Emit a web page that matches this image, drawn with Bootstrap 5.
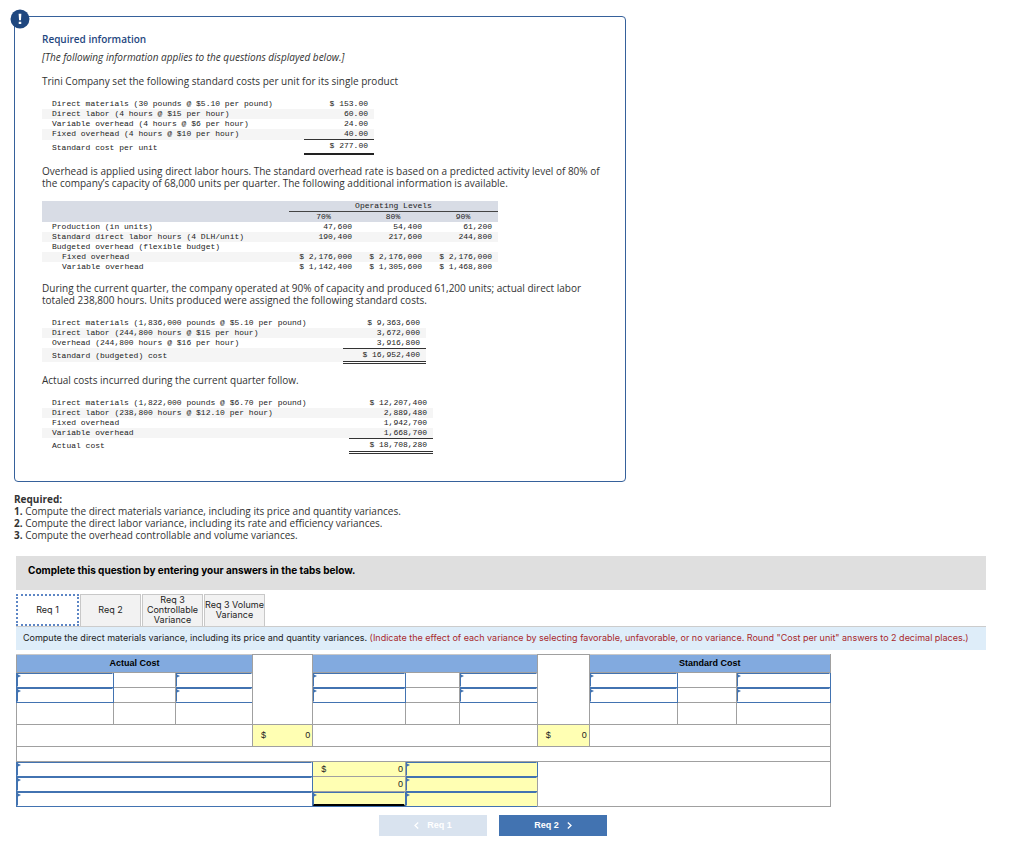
<!DOCTYPE html>
<html lang="en">
<head>
<meta charset="utf-8">
<meta name="viewport" content="width=device-width, initial-scale=1">
<title>Trini Company – Standard Costs</title>
<link href="https://cdn.jsdelivr.net/npm/bootstrap@5.3.0/dist/css/bootstrap.min.css" rel="stylesheet">
<style>
  :root { --navy: #1f477f; --blue: #4273b1; --head: #82aadf; --calc: #ffffb3; --line: #a0a0a0; }
  body { font: 10px/12px "Open Sans", sans-serif; color: #333; background: #fff; }
  .page { padding: 16px 38px 16px 14px; }

  /* Information panel */
  .info-panel { max-width: 63%; border: 1px solid #36619b; border-radius: 4px; padding: 16px 16px 27px 27px; }
  .info-mark { top: -8px; left: -5px; width: 20px; height: 20px; }
  .info-title { font: 600 10px/12px "Open Sans", sans-serif; color: var(--navy); margin: 0 0 6px; }
  .info-panel p { margin: 0 0 12px; }
  .required { margin: 11px 0 15px; }

  /* Cost listings */
  .costs { font: 8px/10px "Liberation Mono", monospace; color: #222; border-collapse: collapse; margin-bottom: 10px; }
  .costs th { font-weight: 400; text-align: left; }
  .costs th, .costs td { padding: 0 0 0 10px; height: 10px; white-space: nowrap; }
  .costs td { text-align: right; padding: 0 6px 0 0; }
  .costs tbody tr:nth-child(even) { background: #f5f5f5; }
  .costs thead { background: #d8dce5; }
  .costs thead th { text-align: center; padding: 0; }
  .costs .levels { border-bottom: 1px solid #444; }
  .costs .indent { padding-left: 20px; }
  .costs .total th { height: 14px; padding-top: 2px; }
  .costs .total td { border-top: 1px solid #333; border-bottom: 2px solid #222; }
  .costs .double td { border-bottom: 3px double #333; }

  /* Answer area */
  .answers { margin-left: 2px; font: 9px/10px Inter, sans-serif; color: #222; }
  .prompt-bar { background: #dfdfdf; padding: 8px 12px 14px; font: 700 10px/12px Inter, sans-serif; color: #000; }
  .req-tabs { border-bottom: 1px solid #ccc; gap: 1px; }
  .req-tabs .nav-link { width: 61px; height: 32px; padding: 0; border: 1px solid #c8c8c8; border-bottom: 0; border-radius: 0; background: #f2f2f2; color: #222; }
  .req-tabs .nav-link.active { width: 63px; border: 2px dotted #5d86c5; background: #fff; color: #222; }
  .instruction { background: #deedf9; padding: 6px 7px 7px; }
  .instruction em { font-style: normal; color: #a8282c; }

  .sheet { width: 84%; table-layout: fixed; border-collapse: collapse; font: 9px/10px "Liberation Sans", sans-serif; border-top: 1px solid #c8c8c8; }
  .sheet th, .sheet td { border: 1px solid var(--line); padding: 0; }
  .sheet th { background: var(--head); text-align: center; color: #000; border-top-color: #c8c8c8; }
  .sheet .entry { position: relative; height: 15px; border-color: var(--blue); }
  .sheet .entry::before { content: ""; position: absolute; top: 1px; left: 0; border: 2px solid transparent; border-left: 4px solid var(--blue); border-right: 0; pointer-events: none; }
  .sheet input { display: block; width: 100%; height: 14px; border: 1px solid transparent; border-top-color: var(--blue); border-left-color: var(--blue); padding: 0 4px; background: transparent; font: inherit; outline: 0; }
  .sheet input:focus { border-color: var(--navy); }
  .sheet .calc { background: var(--calc); }
  .sheet .amount { padding: 0 2px 0 8px; }
  .sheet .sum input { border-bottom: 2px solid #000; }
  .h-head { height: 18px; } .h-entry { height: 15px; } .h-tall { height: 22px; } .h-gap { height: 15px; }

  .step { width: 108px; height: 21px; padding: 0; border: 0; border-radius: 0; background: var(--blue); color: #fff; font: 700 9px/20px "Liberation Sans", sans-serif; }
  .step:hover { background: var(--navy); color: #fff; }
  .step:disabled { background: #d9e3ef; color: #fff; opacity: 1; }
</style>
</head>
<body>
<main class="page">
  <section class="info-panel position-relative">
    <svg class="info-mark position-absolute" viewBox="0 0 19 19" aria-hidden="true"><circle cx="9.500" cy="9.500" r="9" fill="#1f477f"/><path d="M8.200 4.500h2.600l-.4 6.300H8.600zM8.300 12h2.400v2.300H8.300z" fill="#fff"/></svg>
    <h1 class="info-title">Required information</h1>
    <p><i>[The following information applies to the questions displayed below.]</i></p>
    <p>Trini Company set the following standard costs per unit for its single product</p>
    <table class="costs">
      <colgroup><col style="width:262px"><col style="width:70px"></colgroup>
      <tbody>
        <tr><th>Direct materials (30 pounds @ $5.10 per pound)</th><td>$ 153.00</td></tr>
        <tr><th>Direct labor (4 hours @ $15 per hour)</th><td>60.00</td></tr>
        <tr><th>Variable overhead (4 hours @ $6 per hour)</th><td>24.00</td></tr>
        <tr><th>Fixed overhead (4 hours @ $10 per hour)</th><td>40.00</td></tr>
        <tr class="total"><th>Standard cost per unit</th><td>$ 277.00</td></tr>
      </tbody>
    </table>
    <p>Overhead is applied using direct labor hours. The standard overhead rate is based on a predicted activity level of 80% of<br>the company’s capacity of 68,000 units per quarter. The following additional information is available.</p>
    <table class="costs">
      <colgroup><col style="width:247px"><col style="width:69px"><col style="width:70px"><col style="width:70px"></colgroup>
      <thead>
        <tr><th></th><th class="levels" colspan="3">Operating Levels</th></tr>
        <tr><th></th><th>70%</th><th>80%</th><th>90%</th></tr>
      </thead>
      <tbody>
        <tr><th>Production (in units)</th><td>47,600</td><td>54,400</td><td>61,200</td></tr>
        <tr><th>Standard direct labor hours (4 DLH/unit)</th><td>190,400</td><td>217,600</td><td>244,800</td></tr>
        <tr><th>Budgeted overhead (flexible budget)</th><td></td><td></td><td></td></tr>
        <tr><th class="indent">Fixed overhead</th><td>$ 2,176,000</td><td>$ 2,176,000</td><td>$ 2,176,000</td></tr>
        <tr><th class="indent">Variable overhead</th><td>$ 1,142,400</td><td>$ 1,305,600</td><td>$ 1,468,800</td></tr>
      </tbody>
    </table>
    <p>During the current quarter, the company operated at 90% of capacity and produced 61,200 units; actual direct labor<br>totaled 238,800 hours. Units produced were assigned the following standard costs.</p>
    <table class="costs">
      <colgroup><col style="width:301px"><col style="width:83px"></colgroup>
      <tbody>
        <tr><th>Direct materials (1,836,000 pounds @ $5.10 per pound)</th><td>$ 9,363,600</td></tr>
        <tr><th>Direct labor (244,800 hours @ $15 per hour)</th><td>3,672,000</td></tr>
        <tr><th>Overhead (244,800 hours @ $16 per hour)</th><td>3,916,800</td></tr>
        <tr class="total double"><th>Standard (budgeted) cost</th><td>$ 16,952,400</td></tr>
      </tbody>
    </table>
    <p>Actual costs incurred during the current quarter follow.</p>
    <table class="costs mb-0">
      <colgroup><col style="width:307px"><col style="width:84px"></colgroup>
      <tbody>
        <tr><th>Direct materials (1,822,000 pounds @ $6.70 per pound)</th><td>$ 12,207,400</td></tr>
        <tr><th>Direct labor (238,800 hours @ $12.10 per hour)</th><td>2,889,480</td></tr>
        <tr><th>Fixed overhead</th><td>1,942,700</td></tr>
        <tr><th>Variable overhead</th><td>1,668,700</td></tr>
        <tr class="total double"><th>Actual cost</th><td>$ 18,708,280</td></tr>
      </tbody>
    </table>
  </section>

  <section class="required">
    <div><b>Required:</b></div>
    <div><b>1.</b> Compute the direct materials variance, including its price and quantity variances.</div>
    <div><b>2.</b> Compute the direct labor variance, including its rate and efficiency variances.</div>
    <div><b>3.</b> Compute the overhead controllable and volume variances.</div>
  </section>

  <section class="answers">
    <div class="prompt-bar mb-1">Complete this question by entering your answers in the tabs below.</div>
    <div class="nav req-tabs" role="tablist">
      <button class="nav-link active" type="button" role="tab" aria-selected="true">Req 1</button>
      <button class="nav-link" type="button" role="tab">Req 2</button>
      <button class="nav-link" type="button" role="tab">Req 3 Controllable Variance</button>
      <button class="nav-link" type="button" role="tab">Req 3 Volume Variance</button>
    </div>
    <div class="instruction mb-1">Compute the direct materials variance, including its price and quantity variances. <em>(Indicate the effect of each variance by selecting favorable, unfavorable, or no variance. Round "Cost per unit" answers to 2 decimal places.)</em></div>

    <table class="sheet">
      <colgroup>
        <col style="width:11.9%"><col style="width:7.7%"><col style="width:9.4%"><col style="width:7.4%">
        <col style="width:11.4%"><col style="width:6.6%"><col style="width:9.6%"><col style="width:6.4%">
        <col style="width:10.8%"><col style="width:7.3%"><col style="width:11.5%">
      </colgroup>
      <tbody>
        <tr class="h-head"><th colspan="3">Actual Cost</th><td rowspan="4"></td><th colspan="3"></th><td rowspan="4"></td><th colspan="3">Standard Cost</th></tr>
        <tr class="h-entry">
          <td class="entry"><input aria-label="Actual cost quantity label 1"></td><td></td><td class="entry"><input aria-label="Actual cost rate label 1"></td>
          <td class="entry"><input aria-label="Middle quantity label 1"></td><td></td><td class="entry"><input aria-label="Middle rate label 1"></td>
          <td class="entry"><input aria-label="Standard cost quantity label 1"></td><td></td><td class="entry"><input aria-label="Standard cost rate label 1"></td>
        </tr>
        <tr class="h-entry">
          <td class="entry"><input aria-label="Actual cost quantity 2"></td><td></td><td class="entry"><input aria-label="Actual cost rate 2"></td>
          <td class="entry"><input aria-label="Middle quantity 2"></td><td></td><td class="entry"><input aria-label="Middle rate 2"></td>
          <td class="entry"><input aria-label="Standard cost quantity 2"></td><td></td><td class="entry"><input aria-label="Standard cost rate 2"></td>
        </tr>
        <tr class="h-tall"><td></td><td></td><td></td><td></td><td></td><td></td><td></td><td></td><td></td></tr>
        <tr class="h-tall">
          <td colspan="3"></td>
          <td class="calc"><div class="amount d-flex justify-content-between"><span>$</span><span>0</span></div></td>
          <td colspan="3"></td>
          <td class="calc"><div class="amount d-flex justify-content-between"><span>$</span><span>0</span></div></td>
          <td colspan="3"></td>
        </tr>
        <tr class="h-gap"><td colspan="11"></td></tr>
        <tr class="h-entry">
          <td class="entry" colspan="4"><input aria-label="Variance name 1"></td>
          <td class="calc"><div class="amount d-flex justify-content-between"><span>$</span><span>0</span></div></td>
          <td class="entry calc" colspan="2"><input aria-label="Variance effect 1"></td>
          <td colspan="4" rowspan="3"></td>
        </tr>
        <tr class="h-entry">
          <td class="entry" colspan="4"><input aria-label="Variance name 2"></td>
          <td class="calc"><div class="amount text-end">0</div></td>
          <td class="entry calc" colspan="2"><input aria-label="Variance effect 2"></td>
        </tr>
        <tr class="h-entry">
          <td class="entry" colspan="4"><input aria-label="Variance name 3"></td>
          <td class="entry calc sum"><input aria-label="Total variance"></td>
          <td class="entry calc" colspan="2"><input aria-label="Variance effect 3"></td>
        </tr>
      </tbody>
    </table>

    <div class="d-flex justify-content-center gap-2 pt-2 pe-3">
      <button class="step d-flex align-items-center justify-content-center gap-2 me-1" type="button" disabled>
        <svg width="5" height="7" viewBox="0 0 5 7" fill="none" stroke="currentColor" stroke-width="1.300" aria-hidden="true"><path d="M4.200.5 1 3.500l3.200 3"/></svg>Req 1
      </button>
      <button class="step d-flex align-items-center justify-content-center gap-2" type="button">
        Req 2<svg width="5" height="7" viewBox="0 0 5 7" fill="none" stroke="currentColor" stroke-width="1.300" aria-hidden="true"><path d="M.8.5 4 3.500.8 6.500"/></svg>
      </button>
    </div>
  </section>
</main>
<script src="https://cdn.jsdelivr.net/npm/bootstrap@5.3.0/dist/js/bootstrap.bundle.min.js"></script>
</body>
</html>
